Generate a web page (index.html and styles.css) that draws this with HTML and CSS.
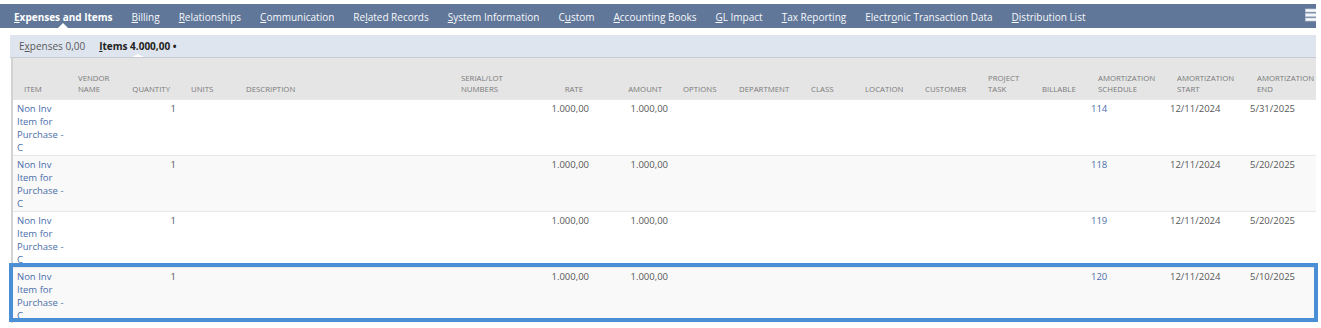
FILE: index.html
```html
<!DOCTYPE html>
<html lang="en">
<head>
  <meta charset="UTF-8">
  <title>Expenses and Items</title>
  <link rel="stylesheet" href="styles.css">
</head>
<body>
  <div class="page">
    <!-- main tabs -->
    <div class="tabbar">
      <span class="tab active"><u>E</u>xpenses and Items</span>
      <span class="tab"><u>B</u>illing</span>
      <span class="tab"><u>R</u>elationships</span>
      <span class="tab"><u>C</u>ommunication</span>
      <span class="tab">Re<u>l</u>ated Records</span>
      <span class="tab"><u>S</u>ystem Information</span>
      <span class="tab">C<u>u</u>stom</span>
      <span class="tab"><u>A</u>ccounting Books</span>
      <span class="tab"><u>G</u>L Impact</span>
      <span class="tab"><u>T</u>ax Reporting</span>
      <span class="tab">Electr<u>o</u>nic Transaction Data</span>
      <span class="tab"><u>D</u>istribution List</span>
      <span class="menu-icon">
        <svg width="12" height="14" viewBox="0 0 12 14">
          <rect x="0.5" y="1" width="12" height="3" fill="#f4f6f9" stroke="#c9d1de" stroke-width="0.6"/>
          <rect x="0.5" y="5.5" width="12" height="3" fill="#f4f6f9" stroke="#c9d1de" stroke-width="0.6"/>
          <rect x="0.5" y="10" width="12" height="3" fill="#f4f6f9" stroke="#c9d1de" stroke-width="0.6"/>
        </svg>
      </span>
    </div>

    <!-- sub tabs -->
    <div class="subtabs">
      <span class="subtab">E<u>x</u>penses 0,00</span>
      <span class="subtab active"><u>I</u>tems 4.000,00 •</span>
    </div>

    <!-- items grid -->
    <div class="grid-wrap">
      <table class="grid">
        <colgroup>
          <col style="width:54px"><col style="width:54px"><col style="width:59px"><col style="width:55px">
          <col style="width:215px"><col style="width:70px"><col style="width:73px"><col style="width:79px">
          <col style="width:56px"><col style="width:72px"><col style="width:54px"><col style="width:60px">
          <col style="width:63px"><col style="width:54px"><col style="width:56px"><col style="width:79px">
          <col style="width:80px"><col style="width:84px">
        </colgroup>
        <thead>
          <tr>
            <th>Item</th>
            <th>Vendor<br>Name</th>
            <th class="num">Quantity</th>
            <th>Units</th>
            <th>Description</th>
            <th>Serial/Lot<br>Numbers</th>
            <th class="num">Rate</th>
            <th class="num">Amount</th>
            <th>Options</th>
            <th>Department</th>
            <th>Class</th>
            <th>Location</th>
            <th>Customer</th>
            <th>Project<br>Task</th>
            <th>Billable</th>
            <th>Amortization<br>Schedule</th>
            <th>Amortization<br>Start</th>
            <th>Amortization<br>End</th>
          </tr>
        </thead>
        <tbody>
          <tr>
            <td><a class="link">Non Inv Item for Purchase - C</a></td>
            <td></td><td class="num">1</td><td></td><td></td><td></td>
            <td class="num">1.000,00</td><td class="num">1.000,00</td>
            <td></td><td></td><td></td><td></td><td></td><td></td><td></td>
            <td><a class="link">114</a></td><td>12/11/2024</td><td>5/31/2025</td>
          </tr>
          <tr>
            <td><a class="link">Non Inv Item for Purchase - C</a></td>
            <td></td><td class="num">1</td><td></td><td></td><td></td>
            <td class="num">1.000,00</td><td class="num">1.000,00</td>
            <td></td><td></td><td></td><td></td><td></td><td></td><td></td>
            <td><a class="link">118</a></td><td>12/11/2024</td><td>5/20/2025</td>
          </tr>
          <tr>
            <td><a class="link">Non Inv Item for Purchase - C</a></td>
            <td></td><td class="num">1</td><td></td><td></td><td></td>
            <td class="num">1.000,00</td><td class="num">1.000,00</td>
            <td></td><td></td><td></td><td></td><td></td><td></td><td></td>
            <td><a class="link">119</a></td><td>12/11/2024</td><td>5/20/2025</td>
          </tr>
          <tr>
            <td><a class="link">Non Inv Item for Purchase - C</a></td>
            <td></td><td class="num">1</td><td></td><td></td><td></td>
            <td class="num">1.000,00</td><td class="num">1.000,00</td>
            <td></td><td></td><td></td><td></td><td></td><td></td><td></td>
            <td><a class="link">120</a></td><td>12/11/2024</td><td>5/10/2025</td>
          </tr>
        </tbody>
      </table>
    </div>

    <!-- annotation box round the last line -->
    <div class="highlight"></div>
  </div>
</body>
</html>
```

FILE: styles.css
```css
/* page */
body {
  margin: 0;
  background: white;
  font-family: "Open Sans", "Liberation Sans", sans-serif;
  overflow: hidden;
}
.page {
  position: relative;
  width: 1316px;
  height: 328px;
  padding-top: 4px;
  box-sizing: border-box;
}
/* main tab bar */
.tabbar {
  display: flex;
  align-items: center;
  gap: 19px;
  height: 24px;
  padding: 2px 0 0 14px;
  box-sizing: border-box;
  background: #607799;
  color: #f7f8fb;
  font-size: 10px;
  white-space: nowrap;
  position: relative;
}
.tab {
  position: relative;
  line-height: 22px;
}
.tab.active {
  font-weight: bold;
  color: white;
}
.tab.active::after {
  content: "";
  position: absolute;
  left: 50%;
  bottom: 0;
  margin-left: -5px;
  border: 5px solid transparent;
  border-bottom-color: white;
  border-top: none;
}
.menu-icon {
  position: absolute;
  right: 0;
  top: 4px;
  width: 11px;
  height: 14px;
  overflow: hidden;
}
/* sub tabs */
.subtabs {
  display: flex;
  align-items: center;
  gap: 14px;
  margin: 7px 0 0 10px;
  height: 22px;
  padding-left: 9px;
  background: #dfe5ee;
  border-bottom: 1px solid #c8ccd2;
  font-size: 10px;
  color: #5a5a5a;
  white-space: nowrap;
}
.subtab {
  position: relative;
  line-height: 22px;
}
.subtab.active {
  font-weight: bold;
  color: #222;
}
.subtab.active::after {
  content: "";
  position: absolute;
  left: 50%;
  bottom: 0;
  margin-left: -6px;
  border: 6px solid transparent;
  border-bottom: 3px solid white;
  border-top: none;
}
/* grid */
.grid-wrap {
  margin-left: 11px;
  border-left: 2px solid #d3d3d3;
  overflow: hidden;
}
.grid {
  table-layout: fixed;
  width: 1317px;
  border-collapse: collapse;
}
.grid th {
  height: 41px;
  padding: 0 4px 4px 11px;
  background: #e5e5e5;
  color: #7a7a7a;
  font-size: 7.8px;
  font-weight: normal;
  line-height: 11px;
  text-transform: uppercase;
  text-align: left;
  vertical-align: bottom;
  white-space: nowrap;
  box-sizing: border-box;
}
.grid th.num {
  text-align: right;
  padding-right: 10px;
}
.grid td {
  height: 55px;
  padding: 2px 0 1px 4px;
  font-size: 9.5px;
  line-height: 13px;
  color: #585858;
  vertical-align: top;
  border-top: 1px solid #e8e8e8;
  box-sizing: border-box;
  white-space: nowrap;
}
.grid td:first-child {
  white-space: normal;
}
.grid td.num {
  text-align: right;
  padding-right: 4px;
}
.grid tbody tr:nth-child(even) td {
  background: #f9f9f9;
}
.link {
  color: #4a6eaa;
  text-decoration: none;
}
/* blue annotation rectangle */
.highlight {
  position: absolute;
  left: 9px;
  top: 263px;
  width: 1309px;
  height: 59px;
  border: 4px solid #4a8fd6;
  box-sizing: border-box;
}
```
